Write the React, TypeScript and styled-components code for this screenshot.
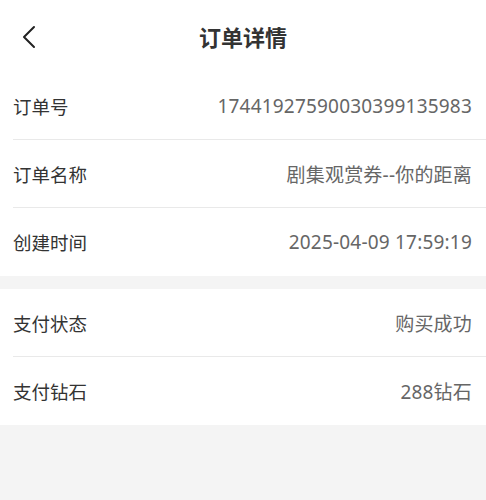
import styled, { createGlobalStyle } from 'styled-components';

const GlobalStyle = createGlobalStyle`
  html, body {
    margin: 0;
    padding: 0;
    background: #f4f4f4;
  }
  body {
    font-family: "Noto Sans", "Noto Sans CJK SC", sans-serif;
  }
`;

const Page = styled.div`
  width: 486px;
  min-height: 500px;
  background: #f4f4f4;
`;

const Header = styled.div`
  height: 72px;
  background: #fff;
  display: flex;
  align-items: center;
  justify-content: center;
  position: relative;
`;

const BackButton = styled.button`
  position: absolute;
  left: 14px;
  top: 22px;
  width: 30px;
  height: 30px;
  padding: 0;
  border: 0;
  background: transparent;
  display: flex;
  align-items: center;
  justify-content: center;
`;

const Title = styled.h1`
  margin: 0;
  font-size: 22px;
  font-weight: 700;
  color: #333;
  font-family: "Noto Sans CJK SC", sans-serif;
`;

const Section = styled.div<{ $gap?: boolean }>`
  background: #fff;
  margin-top: ${(p) => (p.$gap ? '13px' : '0')};
`;

const Row = styled.div`
  height: 68px;
  margin-left: 13px;
  padding-right: 14px;
  display: flex;
  align-items: center;
  justify-content: space-between;
  border-bottom: 1px solid #e9e9e9;
  box-sizing: border-box;

  &:last-child {
    border-bottom: 0;
  }
`;

const Label = styled.span`
  font-size: 18.5px;
  color: #333;
  font-family: "Noto Sans CJK SC", sans-serif;
`;

const Value = styled.span`
  font-size: 19px;
  color: #666;
  font-family: "Noto Sans", "Noto Sans CJK SC", sans-serif;
  letter-spacing: 0.2px;
`;

const orderInfo = [
  { label: '订单号', value: '17441927590030399135983' },
  { label: '订单名称', value: '剧集观赏券--你的距离' },
  { label: '创建时间', value: '2025-04-09 17:59:19' },
];

const payInfo = [
  { label: '支付状态', value: '购买成功' },
  { label: '支付钻石', value: '288钻石' },
];

const App = () => {
  return (
    <Page>
      <GlobalStyle />
      <Header>
        <BackButton aria-label="返回">
          <svg width="14" height="24" viewBox="0 0 14 24" fill="none">
            <path d="M12 2 L2 12 L12 22" stroke="#222" strokeWidth="2" strokeLinecap="round" strokeLinejoin="round" />
          </svg>
        </BackButton>
        <Title>订单详情</Title>
      </Header>
      <Section>
        {orderInfo.map((item) => (
          <Row key={item.label}>
            <Label>{item.label}</Label>
            <Value>{item.value}</Value>
          </Row>
        ))}
      </Section>
      <Section $gap>
        {payInfo.map((item) => (
          <Row key={item.label}>
            <Label>{item.label}</Label>
            <Value>{item.value}</Value>
          </Row>
        ))}
      </Section>
    </Page>
  );
};

export default App;
